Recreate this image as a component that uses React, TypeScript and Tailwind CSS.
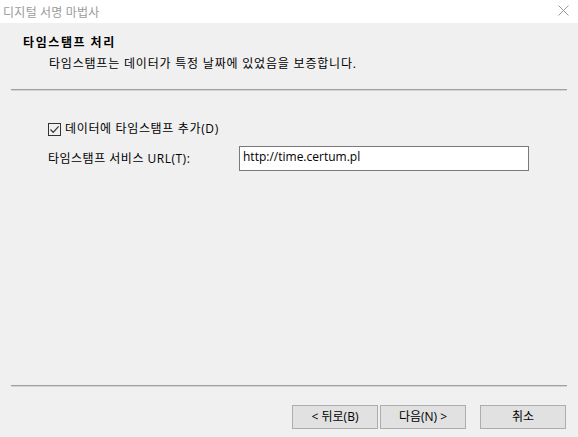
export default function App() {
  return (
    <div className="w-[578px] h-[437px] bg-[#f0f0f0] flex flex-col text-[12px] leading-[16px] text-black font-['Segoe_UI','Open_Sans','Noto_Sans_CJK_KR',sans-serif] overflow-hidden">
      {/* title bar */}
      <div className="h-[23px] bg-white flex items-center justify-between pl-[3px] pr-[9px] shrink-0">
        <span className="text-[#9b9b9b] tracking-[0.3px] font-['Noto_Sans_CJK_KR',sans-serif]">디지털 서명 마법사</span>
        <svg width="11" height="11" viewBox="0 0 11 11" className="mt-[-2px]">
          <path d="M0.5 0.5 L10.5 10.5 M10.5 0.5 L0.5 10.5" stroke="#9a9a9a" strokeWidth="1" fill="none" />
        </svg>
      </div>

      {/* header */}
      <div className="pt-[11px] pl-[23px] shrink-0">
        <div className="font-bold tracking-[1.6px] font-['Noto_Sans_CJK_KR',sans-serif]">타임스탬프 처리</div>
        <div className="mt-[6px] pl-[26px] tracking-[0.8px]">타임스탬프는 데이터가 특정 날짜에 있었음을 보증합니다.</div>
      </div>
      <div className="mx-[11px] mt-[17px] h-[2px] border-t border-t-[#a0a0a0] border-b border-b-[#d4d4d4] shrink-0" />

      {/* content */}
      <div className="pl-[48px] pt-[30px] flex flex-col shrink-0">
        <label className="flex items-center gap-[4px]">
          <span className="w-[13px] h-[13px] border border-[#333] bg-[#f0f0f0] flex items-center justify-center">
            <svg width="11" height="11" viewBox="0 0 11 11">
              <path d="M1.5 5.5 L4.2 8.3 L9.6 2.3" stroke="#333" strokeWidth="1.2" fill="none" />
            </svg>
          </span>
          <span className="tracking-[0.65px]">데이터에 타임스탬프 추가(D)</span>
        </label>
        <div className="flex items-center mt-[9px]">
          <span className="w-[191px] tracking-[0.5px]">타임스탬프 서비스 URL(T):</span>
          <div className="w-[290px] h-[25px] bg-white border border-[#7a7a7a] pl-[3px] flex items-center pb-[3px]">
            http://time.certum.pl
          </div>
        </div>
      </div>

      <div className="flex-1" />

      {/* footer */}
      <div className="mx-[11px] h-[2px] border-t border-t-[#a0a0a0] border-b border-b-[#d4d4d4] shrink-0" />
      <div className="flex justify-end pr-[12px] pt-[18px] pb-[8px] shrink-0">
        <button className="w-[86px] h-[24px] bg-[#e1e1e1] border border-[#adadad] flex items-center justify-center">
          &lt; 뒤로(B)
        </button>
        <button className="ml-[2px] w-[86px] h-[24px] bg-[#e1e1e1] border border-[#adadad] flex items-center justify-center">
          다음(N) &gt;
        </button>
        <button className="ml-[14px] w-[86px] h-[24px] bg-[#e1e1e1] border border-[#adadad] flex items-center justify-center">
          취소
        </button>
      </div>
    </div>
  );
}
